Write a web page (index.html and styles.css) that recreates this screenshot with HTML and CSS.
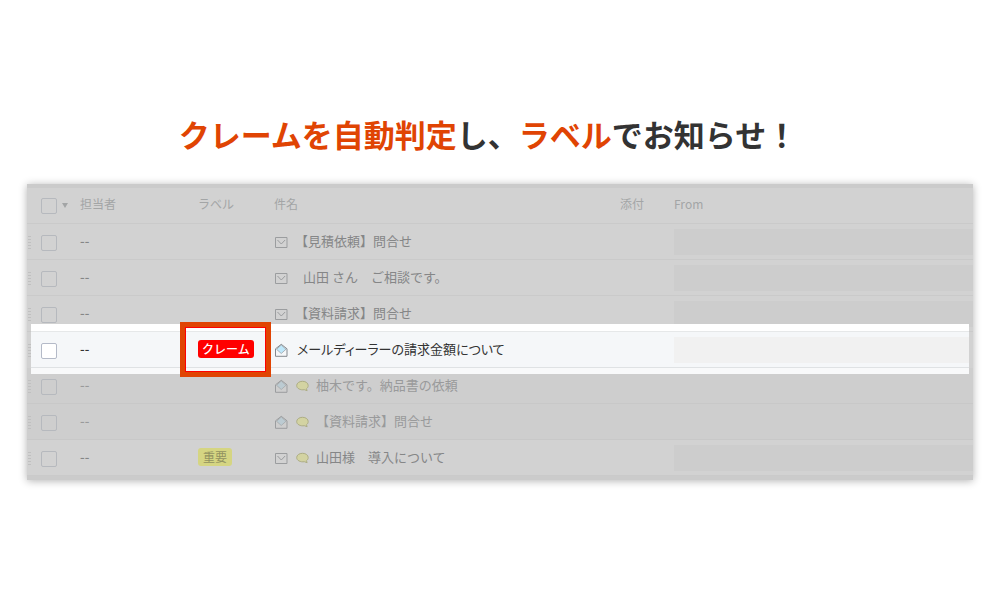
FILE: index.html
```html
<!DOCTYPE html>
<html lang="ja">
<head>
    <meta charset="UTF-8">
    <meta name="viewport" content="width=device-width, initial-scale=1.0">
    <title>クレーム自動判定</title>
    <link rel="stylesheet" href="styles.css">
</head>
<body>
    <!-- アイコン定義 -->
    <svg class="defs" width="0" height="0" aria-hidden="true">
        <symbol id="mail" viewBox="0 0 14 14">
            <path d="M1.500 2.500h11.500v10H1.500z M3.500 5l3.800 4 3.800-4" fill="none" stroke="currentColor"/>
        </symbol>
        <symbol id="mail-open" viewBox="0 0 14 14">
            <path d="M1.500 13.300V5.800L7.250 1.300 13 5.800v7.500z" fill="none" stroke="currentColor"/>
            <path class="paper" d="M7.250 2l4.700 4.300-4.700 4.200-4.700-4.200z" stroke="currentColor" stroke-width=".6"/>
        </symbol>
        <symbol id="balloon" viewBox="0 0 14 14">
            <path d="M7.500 2.300c3.400 0 5.700 1.900 5.700 4.300 0 1.200-.6 2.300-1.700 3.100l.6 2-2.700-1c-4 .6-7.700-1.200-7.700-4.100 0-2.400 2.400-4.300 5.800-4.300z" fill="#d3d3a2" stroke="#adad84"/>
        </symbol>
    </svg>

    <h1><em>クレームを自動判定</em>し、<em>ラベル</em>でお知らせ！</h1>

    <div class="panel">
        <table>
            <thead>
                <tr>
                    <th class="col-check"><input type="checkbox" aria-label="すべて選択"><button class="caret" aria-label="選択メニュー"></button></th>
                    <th class="col-owner">担当者</th>
                    <th class="col-label">ラベル</th>
                    <th class="col-subject">件名</th>
                    <th class="col-file">添付</th>
                    <th class="col-from">From</th>
                </tr>
            </thead>
            <tbody>
                <tr class="unread">
                    <td class="handle"><input type="checkbox" aria-label="選択"></td>
                    <td class="owner">--</td>
                    <td></td>
                    <td><div class="subject"><svg class="icon"><use href="#mail"/></svg><span>【見積依頼】問合せ</span></div></td>
                    <td></td>
                    <td><div class="mask"></div></td>
                </tr>
                <tr class="unread">
                    <td class="handle"><input type="checkbox" aria-label="選択"></td>
                    <td class="owner">--</td>
                    <td></td>
                    <td><div class="subject"><svg class="icon"><use href="#mail"/></svg><span class="indent">山田 さん　ご相談です。</span></div></td>
                    <td></td>
                    <td><div class="mask"></div></td>
                </tr>
                <tr class="unread">
                    <td class="handle"><input type="checkbox" aria-label="選択"></td>
                    <td class="owner">--</td>
                    <td></td>
                    <td><div class="subject"><svg class="icon"><use href="#mail"/></svg><span>【資料請求】問合せ</span></div></td>
                    <td></td>
                    <td><div class="mask"></div></td>
                </tr>
                <tr class="spot">
                    <td class="handle"><input type="checkbox" aria-label="選択"></td>
                    <td class="owner">--</td>
                    <td class="framed"><span class="tag claim">クレーム</span></td>
                    <td><div class="subject"><svg class="icon"><use href="#mail-open"/></svg><span>メールディーラーの請求金額について</span></div></td>
                    <td></td>
                    <td><div class="mask"></div></td>
                </tr>
                <tr class="read">
                    <td class="handle"><input type="checkbox" aria-label="選択"></td>
                    <td class="owner">--</td>
                    <td></td>
                    <td><div class="subject"><svg class="icon"><use href="#mail-open"/></svg><svg class="icon"><use href="#balloon"/></svg><span>柚木です。納品書の依頼</span></div></td>
                    <td></td>
                    <td></td>
                </tr>
                <tr class="read">
                    <td class="handle"><input type="checkbox" aria-label="選択"></td>
                    <td class="owner">--</td>
                    <td></td>
                    <td><div class="subject"><svg class="icon"><use href="#mail-open"/></svg><svg class="icon"><use href="#balloon"/></svg><span>【資料請求】問合せ</span></div></td>
                    <td></td>
                    <td></td>
                </tr>
                <tr class="unread">
                    <td class="handle"><input type="checkbox" aria-label="選択"></td>
                    <td class="owner">--</td>
                    <td><span class="tag important">重要</span></td>
                    <td><div class="subject"><svg class="icon"><use href="#mail"/></svg><svg class="icon"><use href="#balloon"/></svg><span>山田様　導入について</span></div></td>
                    <td></td>
                    <td><div class="mask"></div></td>
                </tr>
            </tbody>
        </table>
    </div>
</body>
</html>
```

FILE: styles.css
```css
* {
    box-sizing: border-box;
}
body {
    min-height: 100vh;
    margin: 0;
    padding: 110px 27px 40px;
    background-color: #fff;
    font-family: "Noto Sans CJK JP", sans-serif;
    color: #333;
}
.defs {
    position: absolute;
}
h1 {
    margin: 0 0 26px;
    padding-right: 24px;
    font-size: 31px;
    line-height: 48px;
    font-weight: 700;
    text-align: center;
}
h1 em {
    font-style: normal;
    color: #e04403;
}
.panel {
    border-top: 4px solid #cbcbcb;
    border-bottom: 4px solid #cbcbcb;
    background-color: #d2d2d2;
    box-shadow: 0 1px 8px rgba(0, 0, 0, 0.3);
}
table {
    width: 100%;
    table-layout: fixed;
    border-collapse: separate;
    border-spacing: 0;
    font-size: 13px;
    line-height: 20px;
}
th,
td {
    height: 36px;
    padding: 0;
    border-bottom: 1px solid #cacaca;
    text-align: left;
    font-weight: 400;
    white-space: nowrap;
}
th {
    padding-bottom: 3px;
    font-size: 12px;
    color: #a3a5a6;
}
.col-check { width: 53px; }
.col-owner { width: 118px; }
.col-label { width: 76px; }
.col-subject { width: 346px; }
.col-file { width: 54px; }

input[type="checkbox"] {
    appearance: none;
    display: inline-block;
    width: 16px;
    height: 16px;
    margin: 0 0 0 14px;
    border: 1px solid #b6b9be;
    border-radius: 2px;
    vertical-align: middle;
}
.caret {
    width: 0;
    height: 0;
    margin-left: 5px;
    padding: 0;
    border: 3px solid transparent;
    border-top: 5px solid #a3a5a6;
    border-bottom: 0;
    background: none;
    vertical-align: middle;
}
/* ドラッグ用のつまみ */
.handle {
    background: repeating-linear-gradient(#c0c0c0 0 1px, transparent 1px 3px) 1px 12px / 3px 13px no-repeat;
}
.owner {
    padding-bottom: 2px;
    font-weight: 500;
}

/* 行の状態 */
.unread { color: #858687; }
.read {
    color: #999a9b;
    background-color: #cecece;
}
.read td { border-color: #c8c8c8; }

.subject {
    display: flex;
    align-items: center;
    gap: 7px;
}
.subject span {
    padding-bottom: 2px;
}
.subject .indent {
    padding-left: 8px;
}
.icon {
    --paper: #bccbd2;
    width: 14px;
    height: 14px;
    color: #9b9d9f;
}
.paper { fill: var(--paper); }
.mask {
    height: 26px;
    background-color: #cdcdcd;
}
.tag {
    display: inline-block;
    margin-bottom: 2px;
    padding: 0 5px;
    border-radius: 3px;
    font-size: 12px;
    line-height: 18px;
    vertical-align: middle;
}
.claim {
    padding: 0 4px;
    background-color: #f00;
    color: #fff;
    font-weight: 500;
}
.important {
    background-color: #d5d582;
    color: #929260;
}

/* 強調表示する行 */
.spot {
    position: relative;
    z-index: 1;
    color: #333;
}
.spot .handle::before {
    content: "";
    position: absolute;
    z-index: -1;
    top: -8px;
    right: 4px;
    bottom: -6px;
    left: 4px;
    background: linear-gradient(#fff 7px, #e6e8e9 7px 8px, #f5f7f9 8px 43px, #dfe2e4 43px 44px, #f8f9fa 44px);
}
.spot td {
    border-bottom-color: transparent;
}
.spot .subject {
    gap: 9px;
    font-feature-settings: "palt";
}
.spot .icon {
    --paper: #bfe8fb;
    color: #84898e;
}
.spot .mask {
    margin-right: 4px;
    background-color: #f1f1f1;
}
.spot input {
    border-color: #b4bac8;
    background-color: #fff;
}
.framed {
    position: relative;
}
.framed::after {
    content: "";
    position: absolute;
    top: -10px;
    left: -18px;
    width: 81px;
    height: 45px;
    border: 5px solid #e04403;
    outline: 1px solid #f00;
    outline-offset: -6px;
}
```
